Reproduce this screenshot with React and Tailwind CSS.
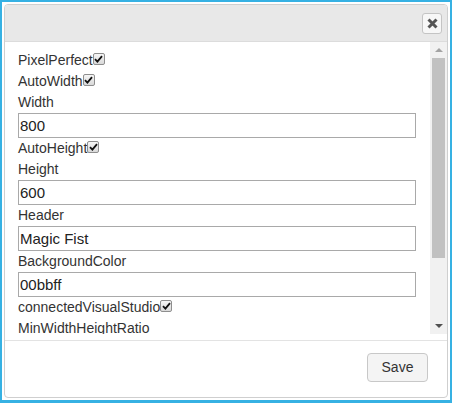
import React from "react";

const Check = () => (
  <span className="inline-flex items-center justify-center w-[12px] h-[12px] mt-[3px] border border-[#8e8e8e] rounded-[2px] bg-gradient-to-b from-[#f6f6f6] to-[#d9d9d9]">
    <svg width="9" height="8" viewBox="0 0 9 8">
      <path d="M1 4.2 L3.4 6.6 L8 1.2" fill="none" stroke="#111" strokeWidth="1.8" />
    </svg>
  </span>
);

const Label = ({ text, checked }) => (
  <div className="flex items-start h-[21px] leading-[21px] text-[14px] text-[#333] whitespace-nowrap">
    <span>{text}</span>
    {checked && <Check />}
  </div>
);

const Field = ({ value }) => (
  <input
    readOnly
    value={value}
    className="block w-[398px] h-[25px] border border-[#a9a9a9] px-[1px] text-[15px] text-[#222] bg-white outline-none"
    style={{ fontFamily: "'Liberation Sans', Arial, sans-serif" }}
  />
);

const App = () => {
  const rows = [
    { label: "PixelPerfect", checked: true },
    { label: "AutoWidth", checked: true },
    { label: "Width", value: "800" },
    { label: "AutoHeight", checked: true },
    { label: "Height", value: "600" },
    { label: "Header", value: "Magic Fist" },
    { label: "BackgroundColor", value: "00bbff" },
    { label: "connectedVisualStudio", checked: true },
    { label: "MinWidthHeightRatio" },
  ];

  return (
    <div
      className="w-[452px] h-[403px] border-2 border-b-[3px] border-[#36b1e3] bg-white p-[2px]"
      style={{ fontFamily: "'Liberation Sans', Arial, sans-serif" }}
    >
      <div className="flex flex-col h-full border border-[#cfcfcf] rounded-[4px] overflow-hidden">
        <div className="h-[37px] shrink-0 bg-[#e8e8e8] border-b border-[#dcdcdc] flex items-center justify-end pr-[5px] pt-[1px]">
          <button className="w-[20px] h-[21px] flex items-center justify-center border border-[#c4c4c4] rounded-[3px] bg-[#f7f7f7]">
            <svg width="11" height="11" viewBox="0 0 11 11">
              <path d="M1.5 1.5 L9.5 9.5 M9.5 1.5 L1.5 9.5" stroke="#555" strokeWidth="3" strokeLinecap="butt" />
            </svg>
          </button>
        </div>

        <div className="h-[299px] shrink-0 flex flex-col border-b border-[#e3e3e3]">
          <div className="h-[292px] flex">
            <div className="flex-1 overflow-hidden pl-[13px] pr-[14px] pt-[8px]">
              {rows.map((r) => (
                <div key={r.label}>
                  <Label text={r.label} checked={r.checked} />
                  {r.value !== undefined && <Field value={r.value} />}
                </div>
              ))}
            </div>
            <div className="w-[17px] bg-[#f1f1f1] flex flex-col items-center">
              <div className="h-[16px] flex items-center justify-center">
                <svg width="8" height="4" viewBox="0 0 8 4">
                  <path d="M0 4 L4 0 L8 4 Z" fill="#a3a3a3" />
                </svg>
              </div>
              <div className="w-[13px] h-[200px] bg-[#c1c1c1]" />
              <div className="flex-1" />
              <div className="h-[16px] flex items-center justify-center">
                <svg width="8" height="4" viewBox="0 0 8 4">
                  <path d="M0 0 L8 0 L4 4 Z" fill="#505050" />
                </svg>
              </div>
            </div>
          </div>
        </div>

        <div className="flex-1 flex justify-end items-start pt-[12px] pr-[19px]">
          <button className="w-[61px] h-[29px] border border-[#c8c8c8] rounded-[4px] bg-[#f4f4f4] text-[14px] text-[#333]">
            Save
          </button>
        </div>
      </div>
    </div>
  );
};

export default App;
